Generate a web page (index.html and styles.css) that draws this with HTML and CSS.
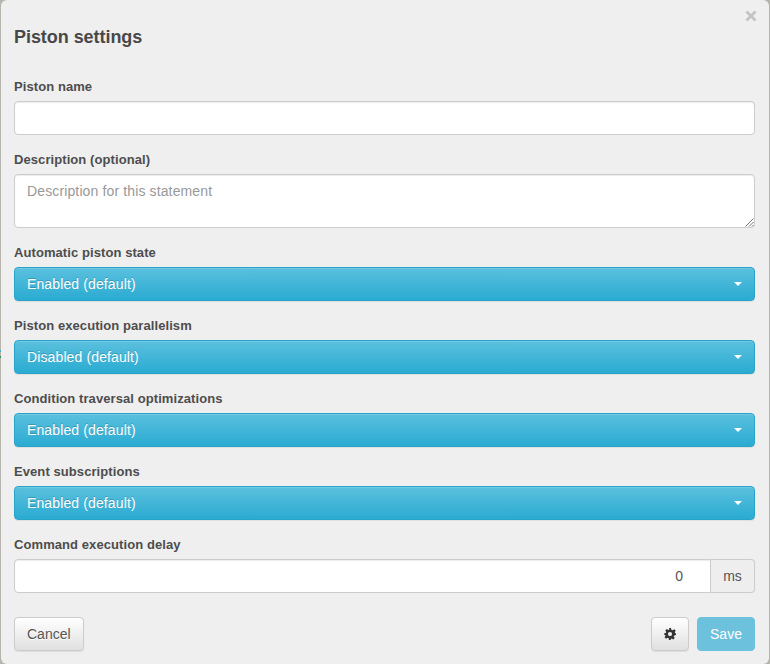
FILE: index.html
```html
<!DOCTYPE html>
<html lang="en">
<head>
<meta charset="utf-8">
<title>Piston settings</title>
<link rel="stylesheet" href="styles.css">
</head>
<body>
<i class="peek peek-blue"></i>
<i class="peek peek-green"></i>
<div class="modal">
  <div class="header">
    <svg class="close" width="12" height="12" viewBox="0 0 12 12" aria-label="Close"><path d="M1.500 1.500L10.500 10.500M10.500 1.500L1.500 10.500" stroke="#c4c4c4" stroke-width="2.800" fill="none"/></svg>
    <h4 class="title">Piston settings</h4>
  </div>
  <form class="body">
    <div class="group">
      <label class="label">Piston name</label>
      <div class="input"></div>
    </div>
    <div class="group">
      <label class="label">Description (optional)</label>
      <div class="input textarea">
        <span class="placeholder">Description for this statement</span>
        <svg class="grip" width="9" height="9" viewBox="0 0 9 9"><path d="M0.5 8.5L8.5 0.5M4 8.5L8.500 4M7 8.500L8.500 7" stroke="#777" stroke-width="1" fill="none"/></svg>
      </div>
    </div>
    <div class="group">
      <label class="label">Automatic piston state</label>
      <div class="select"><span>Enabled (default)</span><i class="caret"></i></div>
    </div>
    <div class="group">
      <label class="label">Piston execution parallelism</label>
      <div class="select"><span>Disabled (default)</span><i class="caret"></i></div>
    </div>
    <div class="group">
      <label class="label">Condition traversal optimizations</label>
      <div class="select"><span>Enabled (default)</span><i class="caret"></i></div>
    </div>
    <div class="group">
      <label class="label">Event subscriptions</label>
      <div class="select"><span>Enabled (default)</span><i class="caret"></i></div>
    </div>
    <div class="group">
      <label class="label">Command execution delay</label>
      <div class="input-group">
        <div class="input number">0</div>
        <div class="addon">ms</div>
      </div>
    </div>
  </form>
  <div class="footer">
    <button class="btn" type="button">Cancel</button>
    <div class="actions">
      <button class="btn gear" type="button" aria-label="Settings">
        <svg width="12" height="12" viewBox="0 0 24 24"><path fill="#333" fill-rule="evenodd" d="M10 0h4l.7 3.300a9 9 0 0 1 2.300 1L20.500 2.500l2.900 2.900-1.900 3a9 9 0 0 1 1 2.300L24 11v3l-3.500.8a9 9 0 0 1-1 2.300l1.900 3-2.900 2.900-3-1.900a9 9 0 0 1-2.300 1L14 24h-4l-.7-3.500a9 9 0 0 1-2.300-1l-3 1.900-2.900-2.900 1.900-3a9 9 0 0 1-1-2.300L0 14v-3l3.500-.8a9 9 0 0 1 1-2.300l-1.900-3L5.500 2l3 1.900a9 9 0 0 1 2.300-1zM12 8a4.200 4.200 0 1 0 0 8.400A4.200 4.200 0 0 0 12 8z"/></svg>
      </button>
      <button class="btn save" type="button">Save</button>
    </div>
  </div>
</div>
</body>
</html>
```
FILE: styles.css
```css
* { box-sizing: border-box; }
html, body { height: 100%; }
body {
  margin: 0;
  padding: 0 1px;
  background: #b5b5ae;
  font-family: "Liberation Sans", Arial, sans-serif;
  font-size: 14px;
  color: #444;
  overflow: hidden;
}
.peek {
  position: absolute;
  left: 0;
  width: 1px;
  height: 2px;
}
.peek-blue { top: 350px; background: #4aa8c8; }
.peek-green { top: 356px; background: #3d8f5a; }
.modal {
  height: 664px;
  background: #efefef;
  border-radius: 6px;
  display: flex;
  flex-direction: column;
}
.header {
  height: 77px;
  padding: 0 13px;
  position: relative;
}
.title {
  margin: 0;
  padding-top: 27px;
  font-size: 18px;
  line-height: 20px;
  font-weight: 700;
  letter-spacing: -0.05px;
  color: #484848;
}
.close {
  position: absolute;
  top: 10px;
  right: 12px;
}
.body {
  padding: 0 14px 0 13px;
  display: flex;
  flex-direction: column;
  gap: 15px;
}
.group { display: flex; flex-direction: column; }
.label {
  height: 19px;
  margin-bottom: 5px;
  font-size: 13px;
  line-height: 19px;
  font-weight: 700;
  letter-spacing: 0.08px;
  color: #4d4d4d;
}
.input {
  height: 34px;
  background: #fff;
  border: 1px solid #ccc;
  border-radius: 4px;
  box-shadow: inset 0 1px 1px rgba(0, 0, 0, .075);
}
.textarea {
  height: 54px;
  padding: 6px 12px;
  position: relative;
}
.placeholder {
  font-size: 14px;
  line-height: 20px;
  letter-spacing: 0.13px;
  color: #999;
}
.grip { position: absolute; right: 0; bottom: 0; }
.select {
  height: 34px;
  padding: 0 13px 0 12px;
  display: flex;
  align-items: center;
  justify-content: space-between;
  border: 1px solid #28a4c9;
  border-radius: 4px;
  background: linear-gradient(to bottom, #5bc0de 0%, #2aabd2 100%);
  box-shadow: inset 0 1px 0 rgba(255, 255, 255, .15), 0 1px 1px rgba(0, 0, 0, .075);
  color: #fff;
  font-size: 14px;
  letter-spacing: 0.12px;
  text-shadow: 0 -1px 0 rgba(0, 0, 0, .2);
}
.caret {
  width: 0;
  height: 0;
  margin-right: -1px;
  border-top: 4px solid #fff;
  border-left: 4px solid transparent;
  border-right: 4px solid transparent;
}
.input-group { display: flex; }
.number {
  flex: 1;
  padding: 0 27px 0 12px;
  border-radius: 4px 0 0 4px;
  line-height: 32px;
  text-align: right;
  color: #555;
}
.addon {
  width: 44px;
  height: 34px;
  border: 1px solid #ccc;
  border-left: 0;
  border-radius: 0 4px 4px 0;
  background: #eee;
  line-height: 32px;
  text-align: center;
  color: #555;
}
.footer {
  margin-top: 24px;
  padding: 0 14px 0 13px;
  display: flex;
  justify-content: space-between;
}
.actions { display: flex; gap: 8px; }
.btn {
  height: 34px;
  padding: 0 12px;
  border: 1px solid #ccc;
  border-radius: 4px;
  background: linear-gradient(to bottom, #fff 0%, #e0e0e0 100%);
  box-shadow: inset 0 1px 0 rgba(255, 255, 255, .15), 0 1px 1px rgba(0, 0, 0, .075);
  font-family: inherit;
  font-size: 14px;
  color: #555;
  text-shadow: 0 1px 0 #fff;
}
.gear {
  width: 38px;
  padding: 0;
  display: flex;
  align-items: center;
  justify-content: center;
}
.save {
  width: 58px;
  padding: 0;
  border-color: #6cc1dc;
  background: #6cc1dc;
  box-shadow: none;
  color: #fff;
  text-shadow: none;
}
```
